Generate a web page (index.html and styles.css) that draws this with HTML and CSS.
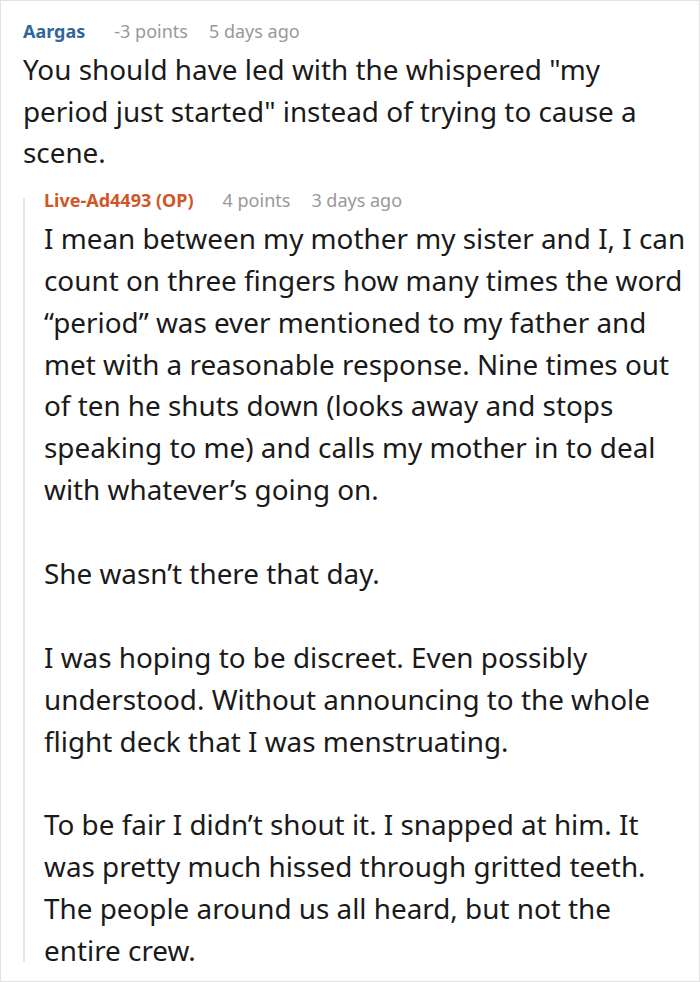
FILE: index.html
```html
<!DOCTYPE html>
<html>
<head>
<meta charset="utf-8">
<link rel="stylesheet" href="styles.css">
</head>
<body>
<div class="page">
  <div class="comment">
    <div class="meta">
      <span class="author">Aargas</span>
      <span class="info">-3 points</span>
      <span class="info">5 days ago</span>
    </div>
    <div class="body">
      <p>You should have led with the whispered "my period just started" instead of trying to cause a scene.</p>
    </div>
    <div class="reply">
      <div class="meta">
        <span class="author op">Live-Ad4493 (OP)</span>
        <span class="info">4 points</span>
        <span class="info">3 days ago</span>
      </div>
      <div class="body">
        <p>I mean between my mother my sister and I, I can count on three fingers how many times the word “period” was ever mentioned to my father and met with a reasonable response. Nine times out of ten he shuts down (looks away and stops speaking to me) and calls my mother in to deal with whatever’s going on.</p>
        <p>She wasn’t there that day.</p>
        <p>I was hoping to be discreet. Even possibly understood. Without announcing to the whole flight deck that I was menstruating.</p>
        <p>To be fair I didn’t shout it. I snapped at him. It was pretty much hissed through gritted teeth. The people around us all heard, but not the entire crew.</p>
      </div>
    </div>
  </div>
</div>
</body>
</html>
```

FILE: styles.css
```css
html, body {
  margin: 0;
  padding: 0;
  background: #ffffff;
}
.page {
  box-sizing: border-box;
  width: 700px;
  height: 982px;
  border: 1px solid #e2e2e2;
  padding: 18px 8px 0 22px;
  overflow: hidden;
  font-family: "Noto Sans", "Open Sans", sans-serif;
  color: #1a1a1a;
}
.meta {
  display: flex;
  align-items: baseline;
  font-size: 18px;
  line-height: 24px;
}
.author {
  font-weight: 700;
  color: #336699;
  margin-right: 29px;
}
.author.op {
  color: #d0562a;
}
.info {
  color: #999999;
  margin-right: 21px;
}
.body {
  font-size: 27.85px;
  line-height: 41.6px;
  margin-top: 6px;
}
.body p {
  margin: 0 0 41.9px 0;
}
.body p:last-child {
  margin-bottom: 0;
}
.reply {
  display: flex;
  flex-direction: column;
  margin-top: 24px;
  border-left: 2px solid #e8e8e8;
  padding-left: 19px;
}
.reply > .meta {
  margin-top: -10px;
}
.reply > .body {
  line-height: 41.9px;
  margin-bottom: -10px;
}
```
